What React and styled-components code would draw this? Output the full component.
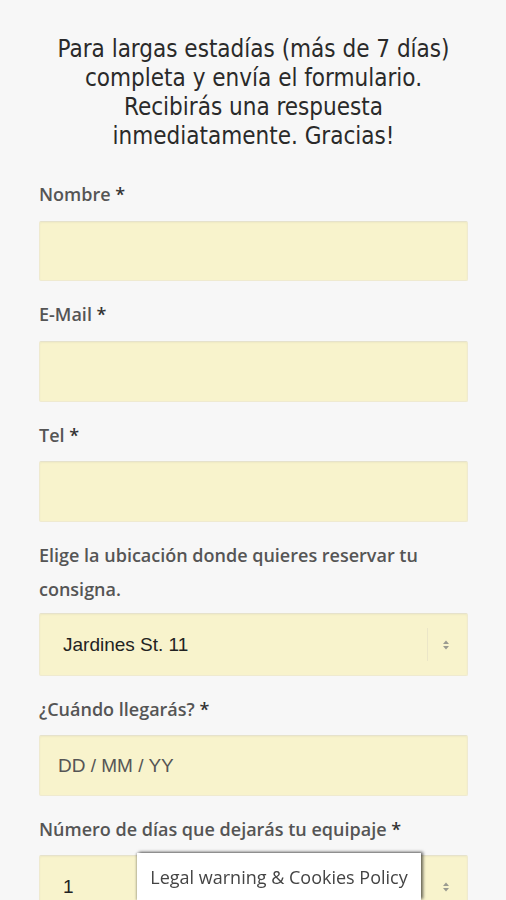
import React from "react";
import styled, { createGlobalStyle } from "styled-components";

const Global = createGlobalStyle`
  html, body { margin: 0; padding: 0; background: #f7f7f7; }
  * { box-sizing: border-box; }
`;

const Page = styled.div`
  padding: 35px 38px 60px 39px;
  min-height: 900px;
`;

const Heading = styled.h2`
  margin: 0 0 26px;
  font-family: "DejaVu Sans Condensed", "DejaVu Sans", sans-serif;
  font-weight: 400;
  font-size: 24px;
  line-height: 29px;
  color: #2a2a2a;
  text-align: center;
`;

const Field = styled.div`
  display: flex;
  flex-direction: column;
  margin-bottom: 16px;
`;

const Label = styled.label`
  font-family: "Open Sans", sans-serif;
  font-weight: 600;
  font-size: 18px;
  line-height: 34px;
  color: #555;
  margin-bottom: ${(p) => p.$gap || 10}px;
`;

const Star = styled.span`
  color: #333;
`;

const Box = styled.div`
  height: ${(p) => p.$h || 61}px;
  background: #f8f3cc;
  border: 1px solid #efead0;
  border-top-color: #e6e2cc;
  border-radius: 2px;
  box-shadow: inset 0 1px 2px rgba(0, 0, 0, 0.04);
  display: flex;
  align-items: center;
  padding-left: ${(p) => p.$pl || 18}px;
  font-family: "Liberation Sans", Arial, sans-serif;
  font-size: 19px;
  color: ${(p) => p.$color || "#222"};
`;

const Value = styled.span`
  flex: 1;
`;

const Arrows = styled.div`
  width: 40px;
  padding-right: 4px;
  align-self: stretch;
  display: flex;
  align-items: center;
  justify-content: center;
  border-left: 1px solid ${(p) => (p.$divider ? "#ebe6c8" : "transparent")};
  margin: 14px 0;
`;

const Banner = styled.div`
  position: fixed;
  left: 137px;
  width: 284px;
  bottom: 0;
  height: 47px;
  background: #fff;
  box-shadow: 2px -1px 3px rgba(0, 0, 0, 0.6), -1px 0 2px rgba(0, 0, 0, 0.25);
  display: flex;
  justify-content: center;
  padding-top: 12px;
  font-family: "Open Sans", sans-serif;
  font-size: 18px;
  line-height: 24px;
  color: #444;
`;

const ArrowIcon = () => (
  <svg width="8" height="12" viewBox="0 0 8 12">
    <path d="M1 5 L4 1.5 L7 5 Z" fill="#9a9a90" />
    <path d="M1 7 L4 10.5 L7 7 Z" fill="#9a9a90" />
  </svg>
);

const Req = ({ children }) => (
  <>
    {children} <Star>*</Star>
  </>
);

export default function App() {
  return (
    <>
      <Global />
      <Page>
        <Heading>
          Para largas estadías (más de 7 días)
          <br />
          completa y envía el formulario.
          <br />
          Recibirás una respuesta
          <br />
          inmediatamente. Gracias!
        </Heading>

        <Field>
          <Label><Req>Nombre</Req></Label>
          <Box $h={60} />
        </Field>
        <Field>
          <Label><Req>E-Mail</Req></Label>
          <Box $h={61} />
        </Field>
        <Field>
          <Label $gap={9}><Req>Tel</Req></Label>
          <Box $h={61} />
        </Field>
        <Field>
          <Label $gap={7}>Elige la ubicación donde quieres reservar tu consigna.</Label>
          <Box $h={63} $pl={23}>
            <Value>Jardines St. 11</Value>
            <Arrows $divider><ArrowIcon /></Arrows>
          </Box>
        </Field>
        <Field>
          <Label $gap={9}><Req>¿Cuándo llegarás?</Req></Label>
          <Box $h={61} $color="#555">
            <Value>DD / MM / YY</Value>
          </Box>
        </Field>
        <Field>
          <Label $gap={9}><Req>Número de días que dejarás tu equipaje</Req></Label>
          <Box $h={63} $pl={23}>
            <Value>1</Value>
            <Arrows><ArrowIcon /></Arrows>
          </Box>
        </Field>
      </Page>
      <Banner>Legal warning &amp; Cookies Policy</Banner>
    </>
  );
}
